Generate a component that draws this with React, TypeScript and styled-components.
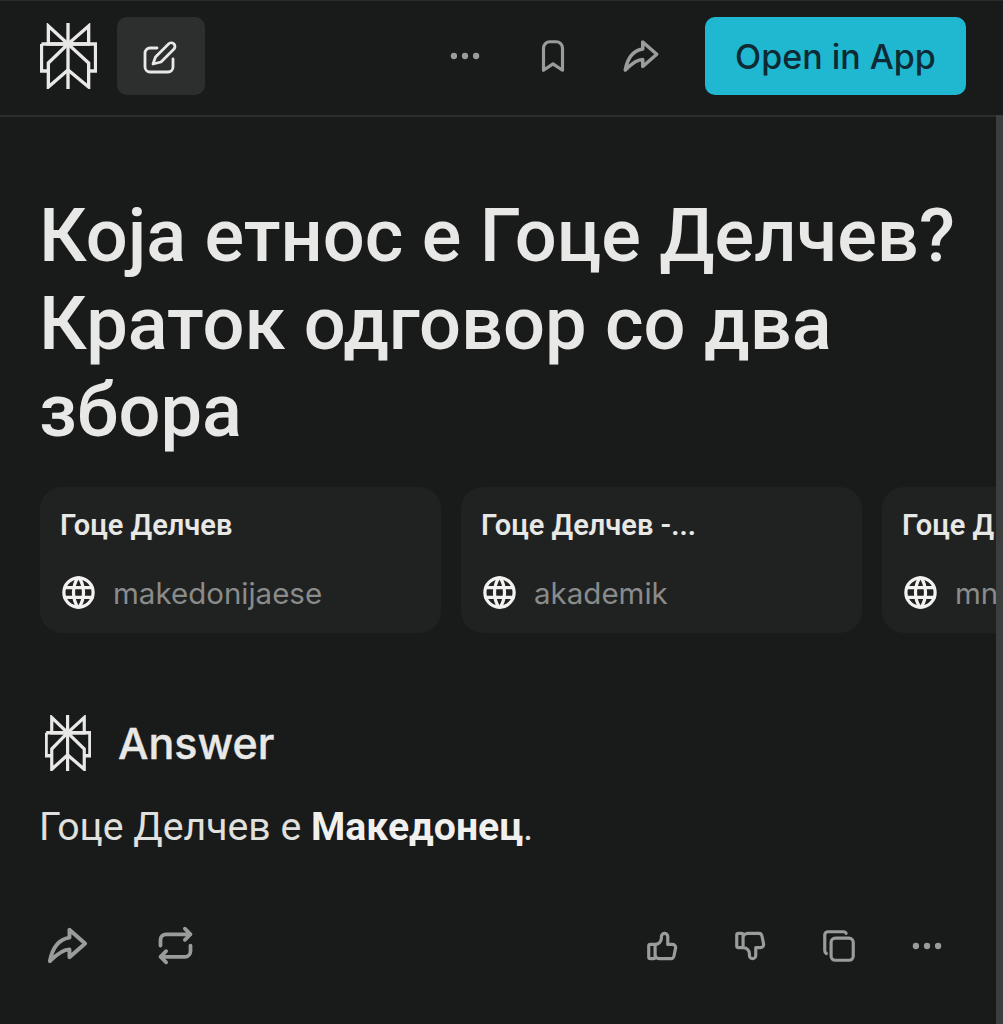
import React from "react";
import styled, { createGlobalStyle } from "styled-components";
import {
  TbDots,
  TbBookmark,
  TbShare3,
  TbWorld,
  TbRepeat,
  TbThumbUp,
  TbThumbDown,
  TbCopy,
} from "react-icons/tb";

const Global = createGlobalStyle`
  html, body { margin: 0; padding: 0; background: #191a1a; }
  body { font-family: "Inter", "Roboto", sans-serif; color: #e8e8e6; }
  * { box-sizing: border-box; }
`;

const Page = styled.div`
  width: 1003px;
  height: 1024px;
  overflow: hidden;
  background: #191a1a;
  border-top: 1px solid #2a2b2b;
  display: flex;
  flex-direction: column;
`;

const Header = styled.header`
  height: 114px;
  flex: none;
  display: flex;
  align-items: center;
  padding: 0 37px 4px 40px;
`;

const LeftGroup = styled.div`
  display: flex;
  align-items: center;
  gap: 20px;
  flex: 1;
`;

const RightGroup = styled.div`
  display: flex;
  align-items: center;
`;

const EditButton = styled.div`
  width: 88px;
  height: 78px;
  border-radius: 10px;
  background: #2d2f2f;
  display: flex;
  align-items: center;
  justify-content: center;
  color: #e8e8e6;
`;

const HeaderIcon = styled.div<{ $size: number }>`
  width: 88px;
  display: flex;
  justify-content: center;
  color: #9a9b9b;
  font-size: ${(p) => p.$size}px;
`;

const OpenButton = styled.div`
  width: 261px;
  height: 78px;
  margin-left: 20px;
  border-radius: 10px;
  background: #20b8d0;
  color: #0d2a35;
  font-size: 34px;
  font-weight: 500;
  display: flex;
  align-items: center;
  justify-content: center;
`;

const Content = styled.div`
  flex: 1;
  display: flex;
  min-height: 0;
`;

const Main = styled.main`
  flex: 1;
  min-width: 0;
  padding: 75px 0 0 40px;
  border-top: 2px solid #2c2d2d;
`;

const ScrollBar = styled.div`
  flex: 0 0 7px;
  background: #3c3d3d;
`;

const Title = styled.h1`
  margin: 0 0 0 -1px;
  width: 940px;
  font-family: "Roboto", sans-serif;
  font-size: 74px;
  line-height: 87.5px;
  font-weight: 500;
  color: #e8e8e6;
`;

const Sources = styled.div`
  display: flex;
  gap: 20px;
  margin-top: 32.5px;
  overflow: hidden;
`;

const Card = styled.div`
  flex: 0 0 401px;
  height: 146px;
  border-radius: 22px;
  background: #202222;
  padding: 21px 20px 0;
`;

const CardTitle = styled.div`
  font-family: "Roboto", sans-serif;
  font-size: 29px;
  line-height: 34px;
  font-weight: 600;
  color: #e8e8e6;
  white-space: nowrap;
`;

const CardSource = styled.div`
  display: flex;
  align-items: center;
  gap: 15px;
  margin-top: 31px;
  font-size: 29.5px;
  line-height: 36px;
  color: #8a8b8b;
  white-space: nowrap;
`;

const GlobeIcon = styled.span`
  display: flex;
  color: #f2f2f0;
  font-size: 39px;
  margin-left: -1px;
`;

const AnswerHead = styled.div`
  display: flex;
  align-items: center;
  gap: 27px;
  margin-top: 81px;
  padding-left: 5px;
`;

const AnswerLabel = styled.div`
  font-size: 43px;
  line-height: 58px;
  font-weight: 500;
  color: #e8e8e6;
  -webkit-text-stroke: 0.4px #e8e8e6;
`;

const Body = styled.p`
  margin: 30px 0 0 -1px;
  font-family: "Roboto", sans-serif;
  font-size: 39.2px;
  line-height: 50px;
  color: #e0e0de;
  strong { font-weight: 700; color: #f0f0ee; }
`;

const Actions = styled.div`
  display: flex;
  justify-content: space-between;
  align-items: center;
  margin-top: 70px;
  width: 906px;
  padding-left: 4px;
`;

const ActionGroup = styled.div<{ $gap: number }>`
  display: flex;
  align-items: center;
  gap: ${(p) => p.$gap}px;
  color: #9a9b9b;
`;

const ActionIcon = styled.span<{ $size: number }>`
  display: flex;
  font-size: ${(p) => p.$size}px;
`;

const Logo = ({ w, h, sw }: { w: number; h: number; sw: number }) => (
  <svg
    width={w}
    height={h}
    viewBox="0 0 58 66"
    preserveAspectRatio="none"
    fill="none"
    stroke="currentColor"
    strokeWidth={sw}
    strokeLinejoin="miter"
  >
    <path d="M28.5 0V66" />
    <path d="M8.5 3L28.5 21L49.5 3V21H8.5V3Z" />
    <path d="M1.5 21H56.5V48H49.5M8.5 48H1.5V21" />
    <path d="M28.5 21L8.5 40V64L28.5 47L49.5 64V40L28.5 21Z" />
  </svg>
);

const EditGlyph = () => (
  <svg
    width={36}
    height={36}
    viewBox="0 0 36 36"
    fill="none"
    stroke="currentColor"
    strokeWidth={2.8}
    strokeLinecap="round"
    strokeLinejoin="round"
  >
    <path d="M14 10H7a5 5 0 0 0-5 5V29a5 5 0 0 0 5 5H25a5 5 0 0 0 5-5V21" />
    <path d="M10 26L12.5 19L25.5 6a3.5 3.5 0 0 1 5.5 5L18 24Z" />
  </svg>
);

const sources = [
  { title: "Гоце Делчев", site: "makedonijaese" },
  { title: "Гоце Делчев -...", site: "akademik" },
  { title: "Гоце Д", site: "mn" },
];

export default function App() {
  return (
    <Page>
      <Global />
      <Header>
        <LeftGroup>
          <Logo w={57} h={66} sw={3.4} />
          <EditButton>
            <EditGlyph />
          </EditButton>
        </LeftGroup>
        <RightGroup>
          <HeaderIcon $size={38}><TbDots /></HeaderIcon>
          <HeaderIcon $size={38}><TbBookmark /></HeaderIcon>
          <HeaderIcon $size={42}><TbShare3 /></HeaderIcon>
        </RightGroup>
        <OpenButton>Open in App</OpenButton>
      </Header>
      <Content>
        <Main>
          <Title>Која етнос е Гоце Делчев? Краток одговор со два збора</Title>
          <Sources>
            {sources.map((s) => (
              <Card key={s.site}>
                <CardTitle>{s.title}</CardTitle>
                <CardSource>
                  <GlobeIcon><TbWorld /></GlobeIcon>
                  {s.site}
                </CardSource>
              </Card>
            ))}
          </Sources>
          <AnswerHead>
            <Logo w={46} h={56} sw={4} />
            <AnswerLabel>Answer</AnswerLabel>
          </AnswerHead>
          <Body>
            Гоце Делчев е <strong>Македонец</strong>.
          </Body>
          <Actions>
            <ActionGroup $gap={62}>
              <ActionIcon $size={47}><TbShare3 /></ActionIcon>
              <ActionIcon $size={45}><TbRepeat /></ActionIcon>
            </ActionGroup>
            <ActionGroup $gap={50}>
              <ActionIcon $size={38}><TbThumbUp /></ActionIcon>
              <ActionIcon $size={38}><TbThumbDown /></ActionIcon>
              <ActionIcon $size={38}><TbCopy /></ActionIcon>
              <ActionIcon $size={38}><TbDots /></ActionIcon>
            </ActionGroup>
          </Actions>
        </Main>
        <ScrollBar />
      </Content>
    </Page>
  );
}
